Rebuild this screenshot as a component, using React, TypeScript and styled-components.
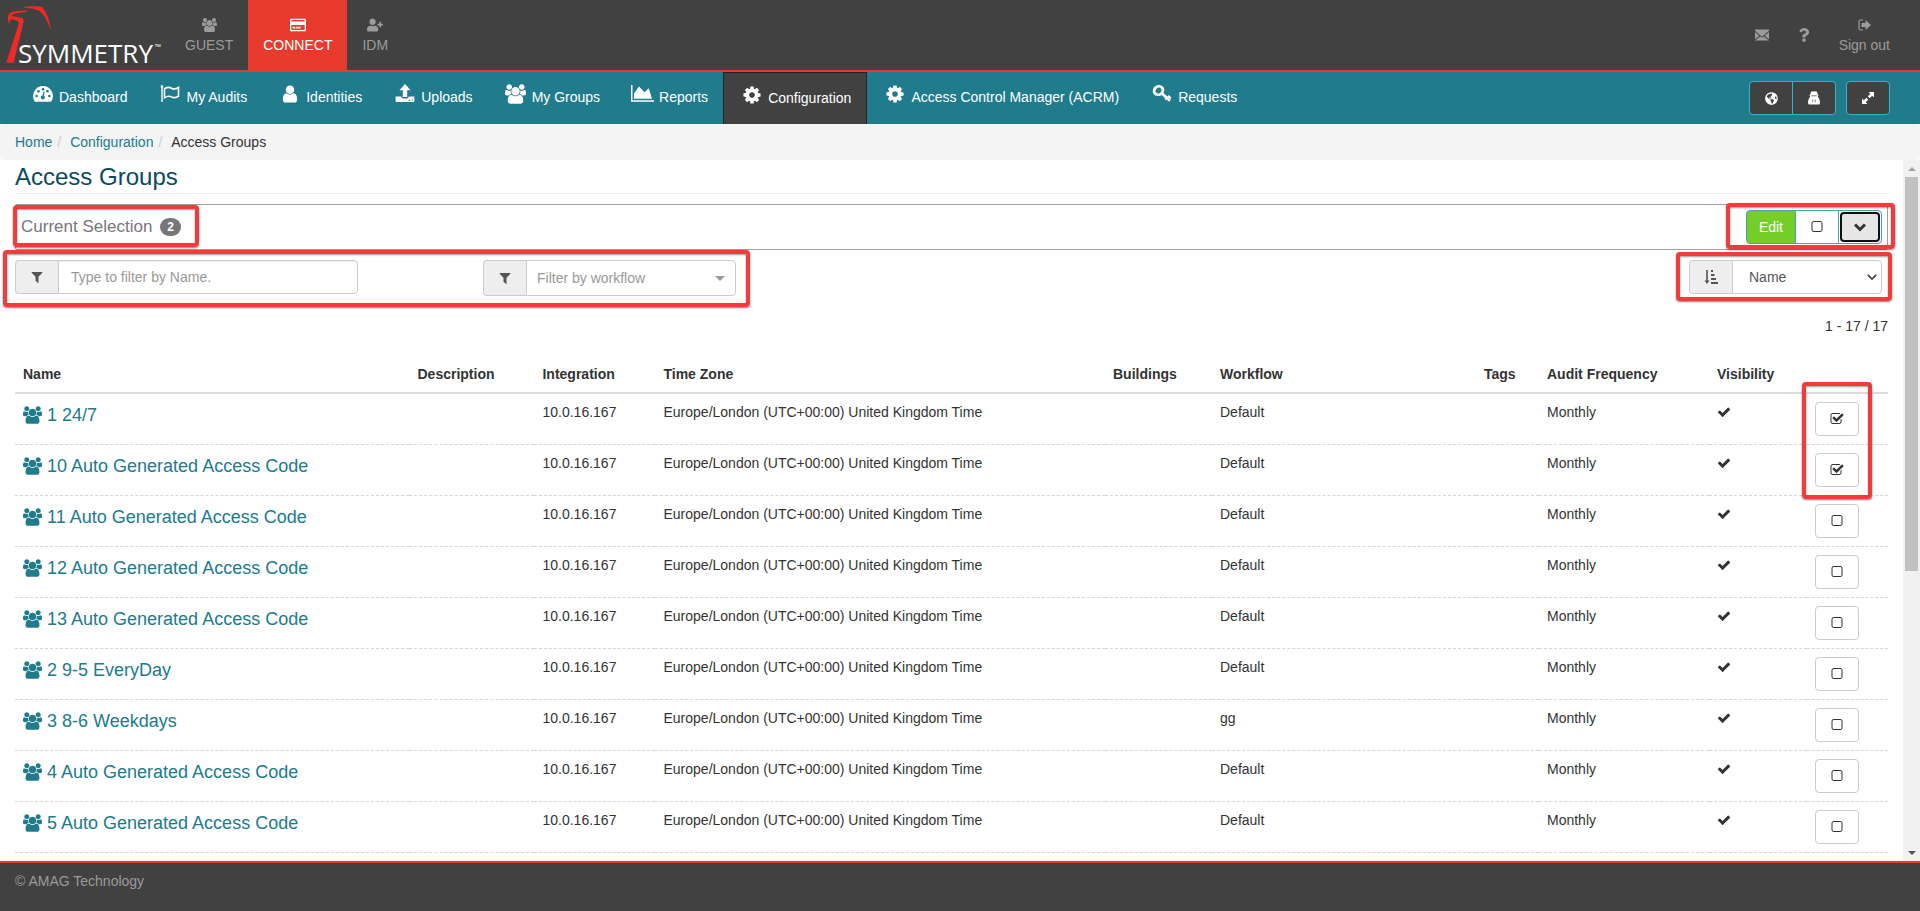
import React, { useState } from "react";
import styled, { createGlobalStyle, css } from "styled-components";
import { FaRegCreditCard, FaUserPlus, FaQuestion, FaGlobeAmericas } from "react-icons/fa";

const color = {
  dark: "#414141",
  red: "#e73c2d",
  teal: "#207b8d",
  tealLight: "#34b4cc",
  muted: "#9b9b9b",
  border: "#cccccc",
  text: "#333333",
  mark: "#f23c3c",
};

const GlobalStyle = createGlobalStyle`
  *, *::before, *::after { box-sizing: border-box; }
  body {
    margin: 0;
    background: #fff;
    color: ${color.text};
    font: 14px/20px "Liberation Sans", Arial, sans-serif;
  }
  button, input, select { font: inherit; margin: 0; }
  svg { display: block; flex: none; }
  a { text-decoration: none; }
`;

/* ---------- icons ---------- */

const PATHS = {
  users:
    "M593 896q-162 5-265 128h-134q-82 0-138-40.500t-56-118.500q0-353 124-353 6 0 43.500 21t97.500 42.500 119 21.500q67 0 133-23-5 37-5 66 0 139 81 256zm1071 637q0 120-73 189.500t-194 69.500h-874q-121 0-194-69.500t-73-189.500q0-53 3.500-103.500t14-109 26.500-108.500 43-97.500 62-81 85.500-53.500 111.500-20q10 0 43 21.500t73 48 107 48 135 21.500 135-21.500 107-48 73-48 43-21.500q61 0 111.500 20t85.500 53.500 62 81 43 97.500 26.500 108.500 14 109 3.500 103.500zm-1024-1277q0 106-75 181t-181 75-181-75-75-181 75-181 181-75 181 75 75 181zm704 384q0 159-112.500 271.500t-271.500 112.500-271.500-112.500-112.500-271.500 112.500-271.500 271.500-112.500 271.500 112.500 112.500 271.500zm576 225q0 78-56 118.500t-138 40.500h-134q-103-123-265-128 81-117 81-256 0-29-5-66 66 23 133 23 59 0 119-21.500t97.500-42.500 43.500-21q124 0 124 353zm-128-609q0 106-75 181t-181 75-181-75-75-181 75-181 181-75 181 75 75 181z",
  user: "M1536 1399q0 109-62.500 187t-150.500 78h-854q-88 0-150.500-78t-62.500-187q0-85 8.500-160.500t31.500-152 58.500-131 94-89 134.500-34.500q131 128 313 128t313-128q76 0 134.500 34.500t94 89 58.500 131 31.500 152 8.500 160.500zm-256-887q0 159-112.500 271.500t-271.500 112.500-271.500-112.500-112.500-271.500 112.500-271.500 271.500-112.500 271.500 112.500 112.500 271.500z",
  check:
    "M1671 566q0 40-28 68l-724 724-136 136q-28 28-68 28t-68-28l-136-136-362-362q-28-28-28-68t28-68l136-136q28-28 68-28t68 28l294 295 656-657q28-28 68-28t68 28l136 136q28 28 28 68z",
  checked:
    "M1472 930v318q0 119-84.500 203.500t-203.500 84.500h-832q-119 0-203.500-84.500t-84.500-203.500v-832q0-119 84.500-203.500t203.500-84.500h832q63 0 117 25 15 7 18 23 3 17-9 29l-49 49q-10 10-23 10-3 0-9-2-23-6-45-6h-832q-66 0-113 47t-47 113v832q0 66 47 113t113 47h832q66 0 113-47t47-113v-254q0-13 9-22l64-64q10-10 23-10 6 0 12 3 20 8 20 29zm231-489l-814 814q-24 24-57 24t-57-24l-430-430q-24-24-24-57t24-57l110-110q24-24 57-24t57 24l263 263 647-647q24-24 57-24t57 24l110 110q24 24 24 57t-24 57z",
  square:
    "M1312 256h-832q-66 0-113 47t-47 113v832q0 66 47 113t113 47h832q66 0 113-47t47-113v-832q0-66-47-113t-113-47zm288 160v832q0 119-84.500 203.500t-203.500 84.500h-832q-119 0-203.500-84.500t-84.500-203.500v-832q0-119 84.500-203.500t203.500-84.500h832q119 0 203.500 84.500t84.500 203.500z",
  cog: "M1152 896q0-106-75-181t-181-75-181 75-75 181 75 181 181 75 181-75 75-181zm512-109v222q0 12-8 23t-20 13l-185 28q-19 54-39 91 35 50 107 138 10 12 10 25t-9 23q-27 37-99 108t-94 71q-12 0-26-9l-138-108q-44 23-91 38-16 136-29 186-7 28-36 28h-222q-14 0-24.500-8.500t-11.500-21.500l-28-184q-49-16-90-37l-141 107q-10 9-25 9-14 0-25-11-126-114-165-168-7-10-7-23 0-12 8-23 15-21 51-66.500t54-70.500q-27-50-41-99l-183-27q-13-2-21-12.500t-8-23.500v-222q0-12 8-23t19-13l186-28q14-46 39-92-40-57-107-138-10-12-10-24 0-10 9-23 26-36 98.500-107.500t94.500-71.500q13 0 26 10l138 107q44-23 91-38 16-136 29-186 7-28 36-28h222q14 0 24.500 8.500t11.500 21.500l28 184q49 16 90 37l142-107q9-9 24-9 13 0 25 10 129 119 165 170 7 8 7 22 0 12-8 23-15 21-51 66.500t-54 70.500q26 50 41 98l183 28q13 2 21 12.500t8 23.500z",
  filter:
    "M1595 295q17 41-14 70l-493 493v742q0 42-39 59-13 5-25 5-27 0-45-19l-256-256q-19-19-19-45v-486l-493-493q-31-29-14-70 17-39 59-39h1280q42 0 59 39z",
};

type GlyphProps = { name: keyof typeof PATHS; size: number };

const Glyph = ({ name, size }: GlyphProps) => {
  const box = name === "users" ? 1920 : 1792;
  return (
    <svg width={Math.round((size * box) / 1792)} height={size} viewBox={`0 0 ${box} 1792`} fill="currentColor" aria-hidden="true">
      <path d={PATHS[name]} />
    </svg>
  );
};

const DashboardIcon = () => (
  <svg width="20" height="20" viewBox="0 0 20 20" aria-hidden="true">
    <path d="M10 2a10 10 0 0 0-8.400 15.200q.3.500.9.500h15q.6 0 .9-.5A10 10 0 0 0 10 2z" fill="#fff" />
    <g fill={color.teal}>
      <circle cx="3.600" cy="12" r="1.300" />
      <circle cx="5.500" cy="7.300" r="1.300" />
      <circle cx="10" cy="5.300" r="1.300" />
      <circle cx="14.500" cy="7.300" r="1.300" />
      <circle cx="16.400" cy="12" r="1.300" />
      <path d="M10.500 7.500l1.200.3-.8 4a2 2 0 1 1-1.300-.3z" />
    </g>
  </svg>
);

const FlagIcon = () => (
  <svg width="20" height="20" viewBox="0 0 20 20" fill="none" stroke="#fff" aria-hidden="true">
    <circle cx="2" cy="2.600" r="1.400" fill="#fff" stroke="none" />
    <path d="M2 3v15" strokeWidth="1.400" />
    <path d="M4.500 4.800C7 3.300 9 2.700 11.500 4.200s4.500.8 7-.7v8.800c-2.500 1.500-4.500 2-7 .6s-4.500-.7-7 .9z" strokeWidth="1.600" />
  </svg>
);

const UploadIcon = () => (
  <svg width="20" height="20" viewBox="0 0 20 20" aria-hidden="true">
    <path d="M10 0l5.600 6.200h-3.400V13H7.800V6.200H4.400z" fill="#fff" />
    <path d="M.6 12.600h5.600q.4 2 2 2h3.600q1.600 0 2-2h5.600V17q0 1-1 1H1.600q-1 0-1-1z" fill="#fff" />
    <g fill={color.teal}>
      <circle cx="14.300" cy="16.200" r=".7" />
      <circle cx="17.200" cy="16.200" r=".7" />
    </g>
  </svg>
);

const ChartIcon = () => (
  <svg width="23" height="20" viewBox="0 0 23 20" fill="#fff" aria-hidden="true">
    <path d="M0 1h1.500v15.300H23v1.500H0z" />
    <path d="M3 14.800V9.500L8 2.500l5.500 5.700 4.200-4L21 14.800z" />
  </svg>
);

const KeyIcon = () => (
  <svg width="20" height="20" viewBox="0 0 20 20" fill="none" stroke="#fff" aria-hidden="true">
    <ellipse cx="6.500" cy="6.500" rx="4.600" ry="4" strokeWidth="2.800" transform="rotate(-35 6.500 6.500)" />
    <path d="M9.500 9l8.500 7.700" strokeWidth="2.600" />
    <path d="M13.200 15.500l2.200-2.600M16 11.700l2.800 2.600" strokeWidth="2" />
  </svg>
);

const EnvelopeIcon = () => (
  <svg width="14" height="12" viewBox="0 0 14 12" fill="currentColor" aria-hidden="true">
    <path d="M0 .5h14v1.300L7.600 7.200q-.6.500-1.200 0L0 1.800z" />
    <path d="M0 3l4.300 3.700L0 10.300zM14 3L9.700 6.700l4.300 3.600zM5.100 7.400l.8.700q1.100.8 2.200 0l.8-.7 5.100 4.100H0z" />
  </svg>
);

const SignOutIcon = () => (
  <svg width="13" height="12" viewBox="0 0 13 12" aria-hidden="true">
    <path d="M5 1H2.500Q1 1 1 2.500v7Q1 11 2.500 11H5" fill="none" stroke="currentColor" strokeWidth="1.200" />
    <path d="M3.500 4H7.500V1L13 6l-5.500 5V8h-4z" fill="currentColor" />
  </svg>
);

const AgentIcon = () => (
  <svg width="12" height="14" viewBox="0 0 12 14" fill="currentColor" aria-hidden="true">
    <path d="M3 .8Q4.200 0 5 .6h2Q7.800 0 9 .8l.7 2.600 1 .8-1 .8 1 2Q12 8.500 12 12q0 1.500-1.500 1.500h-9Q0 13.500 0 12q0-3.500 1.300-5l1-2-1-.8 1-.8z" />
    <path d="M4.300 8.200l1 1-.5 3zM7.700 8.200l-1 1 .5 3z" fill={color.dark} />
    <path d="M3.300 4.500h5.400v.7H3.300z" fill={color.dark} />
  </svg>
);

const ExpandIcon = () => (
  <svg width="14" height="14" viewBox="0 0 14 14" fill="currentColor" aria-hidden="true">
    <path d="M7.500 1H13v5.500l-1.800-1.800-2.500 2.500-1.900-1.900 2.500-2.500zM6.500 13H1V7.500l1.800 1.800 2.500-2.500 1.900 1.900-2.500 2.500z" />
  </svg>
);

const ChevronIcon = ({ size, weight }: { size: number; weight: number }) => (
  <svg width={size} height={size} viewBox="0 0 12 12" fill="none" stroke="currentColor" strokeWidth={weight} aria-hidden="true">
    <path d="M1 3.500l5 5 5-5" />
  </svg>
);

const SortIcon = () => (
  <svg width="14" height="14" viewBox="0 0 14 14" fill="currentColor" aria-hidden="true">
    <path d="M2.200 0h1.600v10.500h1.700L3 14 .5 10.500h1.700zM7 0h2v2H7zM7 4h3.500v2H7zM7 8h5v2H7zM7 12h7v2H7z" />
  </svg>
);

const Logo = () => (
  <svg width="170" height="70" viewBox="0 0 170 70" role="img" aria-label="Symmetry">
    <g transform="scale(.3333)" fill="#ee2a24">
      <path d="M66 24Q98 13 126 21Q149 48 153 94Q140 50 119 33Q96 22 66 24Z" />
      <path d="M28 74Q18 50 30 38Q50 31 84 32Q82 36 60 38Q38 40 34 48Q50 50 66 54Q73 58 70 68L41 188L19 188L56 72Q57 63 46 60Q34 57 30 60Z" />
    </g>
    <text x="18" y="63" fill="#fff" fontSize="26" fontFamily='"Open Sans", sans-serif'>
      SYMMETRY
    </text>
    <text x="154" y="49" fill="#fff" fontSize="7" fontFamily='"Liberation Sans", sans-serif'>
      ™
    </text>
  </svg>
);

/* ---------- page frame ---------- */

const Page = styled.div`
  display: flex;
  flex-direction: column;
  height: 100vh;
  overflow: hidden;
`;

const Header = styled.header`
  display: flex;
  flex: none;
  background: ${color.dark};
  border-bottom: 2px solid ${color.red};
  padding-right: 15px;
`;

const Spacer = styled.div`
  flex: 1;
`;

const ProductLink = styled.a<{ $active?: boolean }>`
  display: flex;
  flex-direction: column;
  align-items: center;
  justify-content: center;
  min-height: 70px;
  padding: 0 15px;
  color: ${(p) => (p.$active ? "#fff" : color.muted)};
  background: ${(p) => (p.$active ? color.red : "transparent")};
`;

const ProductIcon = styled.span<{ $narrow?: boolean }>`
  display: flex;
  align-items: center;
  justify-content: center;
  height: 20px;
  width: ${(p) => (p.$narrow ? "10px" : "auto")};
`;

const NavBar = styled.nav`
  display: flex;
  flex: none;
  align-items: stretch;
  min-height: 52px;
  padding: 0 30px 0 15px;
  background: ${color.teal};
`;

const NavLink = styled.a<{ $active?: boolean }>`
  display: flex;
  align-items: flex-start;
  gap: 4px;
  padding: 12px 15px 0;
  color: #fff;
  ${(p) =>
    p.$active &&
    css`
      background: ${color.dark};
      border: 1px solid #222;
      border-bottom: 0;
    `}
`;

const NavIcon = styled.span`
  display: flex;
  justify-content: center;
  width: 25px;
`;

const NavLabel = styled.span`
  padding-top: 3px;
`;

const NavTools = styled.div`
  display: flex;
  gap: 10px;
  align-items: center;
`;

const ButtonGroup = styled.div`
  display: flex;
  position: relative;
  & > button:not(:first-of-type) {
    margin-left: -1px;
    border-top-left-radius: 0;
    border-bottom-left-radius: 0;
  }
  & > button:not(:last-of-type) {
    border-top-right-radius: 0;
    border-bottom-right-radius: 0;
  }
`;

const Button = styled.button<{ $kind?: "tool" | "edit" | "panel" | "row" }>`
  display: flex;
  align-items: center;
  justify-content: center;
  min-width: 44px;
  height: 34px;
  padding: 0 12px;
  border: 1px solid ${color.border};
  border-radius: 4px;
  background: #fff;
  color: ${color.text};
  ${(p) =>
    p.$kind === "tool" &&
    css`
      background: ${color.dark};
      border-color: ${color.tealLight};
      color: #fff;
    `}
  ${(p) =>
    p.$kind === "panel" &&
    css`
      border-color: #46a3b5;
    `}
  ${(p) =>
    p.$kind === "edit" &&
    css`
      background: #73cf28;
      border-color: #46a3b5;
      color: #fff;
    `}
`;

const FocusedButton = styled(Button)`
  padding: 0;
  & > span {
    display: flex;
    align-items: center;
    justify-content: center;
    width: 40px;
    height: 30px;
    border: 2px solid #101010;
    border-radius: 4px;
    background: #e6e6e6;
  }
`;

const Breadcrumb = styled.ol`
  display: flex;
  flex: none;
  margin: 0;
  padding: 8px 15px;
  list-style: none;
  background: #f4f4f4;
  border-radius: 4px;
  & > li + li::before {
    content: "/\\00a0";
    padding: 0 5px;
    color: #ccc;
  }
`;

const TextLink = styled.a`
  color: ${color.teal};
`;

const Body = styled.div`
  display: flex;
  flex: 1;
  min-height: 0;
`;

const Main = styled.main`
  flex: 1;
  min-width: 0;
  overflow: hidden;
  padding: 0 15px;
`;

const ScrollTrack = styled.div`
  display: flex;
  flex-direction: column;
  align-items: center;
  width: 17px;
  background: #f1f1f1;
`;

const ScrollArrow = styled.span<{ $down?: boolean }>`
  display: flex;
  align-items: center;
  justify-content: center;
  height: 17px;
  color: ${(p) => (p.$down ? "#505050" : "#a3a3a3")};
`;

const ScrollRail = styled.div`
  flex: 1;
  width: 13px;
`;

const ScrollThumb = styled.div`
  height: 59%;
  background: #c1c1c1;
`;

const Footer = styled.footer`
  flex: none;
  min-height: 50px;
  padding: 8px 15px;
  border-top: 2px solid ${color.red};
  background: ${color.dark};
  color: ${color.muted};
`;

/* ---------- content ---------- */

const Title = styled.h1`
  margin: 0 0 10px;
  padding: 4px 0 3px;
  border-bottom: 1px solid #eee;
  color: #0b4a5c;
  font-size: 24px;
  font-weight: 400;
  line-height: 26px;
`;

const Mark = styled.span<{ $box: [number, number, number, number] }>`
  position: absolute;
  top: ${(p) => p.$box[0]}px;
  right: ${(p) => p.$box[1]}px;
  bottom: ${(p) => p.$box[2]}px;
  left: ${(p) => p.$box[3]}px;
  border: 4px solid ${color.mark};
  border-radius: 4px;
  box-shadow: 0 1px 2px rgba(0, 0, 0, 0.5), inset 0 1px 2px rgba(0, 0, 0, 0.4);
  pointer-events: none;
  z-index: 1;
`;

const SelectionPanel = styled.section`
  display: flex;
  align-items: center;
  justify-content: space-between;
  height: 46px;
  margin-bottom: 10px;
  padding: 0 5px;
  border: 1px solid #a0a0a0;
  border-radius: 2px;
`;

const SelectionTitle = styled.h2`
  display: flex;
  position: relative;
  align-items: center;
  gap: 8px;
  margin: 0;
  color: #777;
  font-size: 17px;
  font-weight: 400;
`;

const Badge = styled.span`
  min-width: 20px;
  padding: 3px 7px;
  border-radius: 10px;
  background: #777;
  color: #fff;
  font-size: 12px;
  font-weight: 700;
  line-height: 12px;
  text-align: center;
`;

const Toolbar = styled.div`
  display: flex;
  align-items: flex-start;
  justify-content: space-between;
  margin-bottom: 20px;
  padding-right: 6px;
`;

const Filters = styled.div`
  display: flex;
  position: relative;
  align-items: flex-start;
  gap: 125px;
`;

const InputGroup = styled.div<{ $width: number; $tall?: boolean }>`
  display: flex;
  position: relative;
  width: ${(p) => p.$width}px;
  height: ${(p) => (p.$tall ? 36 : 34)}px;
`;

const Addon = styled.label`
  display: flex;
  flex: none;
  align-items: center;
  justify-content: center;
  width: 43px;
  border: 1px solid ${color.border};
  border-right: 0;
  border-radius: 4px 0 0 4px;
  background: #eee;
  color: #555;
`;

const fieldStyle = css`
  flex: 1;
  min-width: 0;
  padding: 0 12px;
  border: 1px solid ${color.border};
  border-radius: 0 4px 4px 0;
  background: #fff;
  color: #555;
`;

const TextField = styled.input`
  ${fieldStyle}
  box-shadow: inset 0 1px 1px rgba(0, 0, 0, 0.075);
  &::placeholder {
    color: #999;
    opacity: 1;
  }
`;

const SelectField = styled.select<{ $empty?: boolean }>`
  ${fieldStyle}
  appearance: none;
  padding: 0 ${(p) => (p.$empty ? 10 : 16)}px;
  color: ${(p) => (p.$empty ? "#999" : "#555")};
`;

const FieldArrow = styled.span<{ $right: number }>`
  display: flex;
  position: absolute;
  top: 0;
  right: ${(p) => p.$right}px;
  bottom: 0;
  align-items: center;
  color: #444;
  pointer-events: none;
`;

const Caret = styled.i`
  border: 5px solid transparent;
  border-top-color: #999;
  border-bottom: 0;
`;

const Count = styled.p`
  margin: 0 0 20px;
  text-align: right;
`;

const TableWrap = styled.div`
  position: relative;
`;

const Table = styled.table`
  width: 100%;
  border-collapse: collapse;
  table-layout: fixed;
  th {
    padding: 8px;
    border-bottom: 2px solid #ddd;
    text-align: left;
    font-weight: 700;
  }
  td {
    height: 51px;
    padding: 8px;
    border-bottom: 1px dashed #d6d6d6;
    vertical-align: top;
  }
`;

const Col = styled.col<{ $width?: string }>`
  width: ${(p) => p.$width ?? "auto"};
`;

const GroupLink = styled.a`
  display: flex;
  align-items: center;
  gap: 5px;
  color: ${color.teal};
  font-size: 18px;
  line-height: 26px;
  white-space: nowrap;
`;

const CheckCell = styled.span`
  display: flex;
  align-items: center;
  height: 20px;
`;

const RowsMark = styled(Mark)`
  top: 26px;
  right: 16px;
  bottom: auto;
  left: auto;
  width: 70px;
  height: 117px;
`;

const NAV = [
  { label: "Dashboard", icon: <DashboardIcon /> },
  { label: "My Audits", icon: <FlagIcon /> },
  { label: "Identities", icon: <Glyph name="user" size={20} /> },
  { label: "Uploads", icon: <UploadIcon /> },
  { label: "My Groups", icon: <Glyph name="users" size={20} /> },
  { label: "Reports", icon: <ChartIcon /> },
  { label: "Configuration", icon: <Glyph name="cog" size={20} />, active: true },
  { label: "Access Control Manager (ACRM)", icon: <Glyph name="cog" size={20} /> },
  { label: "Requests", icon: <KeyIcon /> },
];

const COLUMNS: [string, string?][] = [
  ["Name"],
  ["Description", "125px"],
  ["Integration", "121px"],
  ["Time Zone", "24%"],
  ["Buildings", "107px"],
  ["Workflow", "264px"],
  ["Tags", "63px"],
  ["Audit Frequency", "170px"],
  ["Visibility", "98px"],
  ["", "81px"],
];

const GROUPS = [
  { name: "1 24/7", workflow: "Default" },
  { name: "10 Auto Generated Access Code", workflow: "Default" },
  { name: "11 Auto Generated Access Code", workflow: "Default" },
  { name: "12 Auto Generated Access Code", workflow: "Default" },
  { name: "13 Auto Generated Access Code", workflow: "Default" },
  { name: "2 9-5 EveryDay", workflow: "Default" },
  { name: "3 8-6 Weekdays", workflow: "gg" },
  { name: "4 Auto Generated Access Code", workflow: "Default" },
  { name: "5 Auto Generated Access Code", workflow: "Default" },
];

export default function App() {
  const [selected, setSelected] = useState<string[]>([GROUPS[0].name, GROUPS[1].name]);
  const toggle = (name: string) =>
    setSelected((list) => (list.includes(name) ? list.filter((n) => n !== name) : [...list, name]));

  return (
    <Page>
      <GlobalStyle />
      <Header>
        <Logo />
        <ProductLink href="#guest">
          <ProductIcon><Glyph name="users" size={14} /></ProductIcon>
          GUEST
        </ProductLink>
        <ProductLink href="#connect" $active>
          <ProductIcon><FaRegCreditCard size={16} /></ProductIcon>
          CONNECT
        </ProductLink>
        <ProductLink href="#idm">
          <ProductIcon><FaUserPlus size={16} /></ProductIcon>
          IDM
        </ProductLink>
        <Spacer />
        <ProductLink href="#messages" aria-label="Messages"><EnvelopeIcon /></ProductLink>
        <ProductLink href="#help" aria-label="Help">
          <ProductIcon $narrow><FaQuestion size={14} /></ProductIcon>
        </ProductLink>
        <ProductLink href="#signout">
          <ProductIcon><SignOutIcon /></ProductIcon>
          Sign out
        </ProductLink>
      </Header>

      <NavBar>
        {NAV.map((item) => (
          <NavLink key={item.label} href="#nav" $active={item.active}>
            <NavIcon>{item.icon}</NavIcon>
            <NavLabel>{item.label}</NavLabel>
          </NavLink>
        ))}
        <Spacer />
        <NavTools>
          <ButtonGroup>
            <Button $kind="tool" aria-label="Language"><FaGlobeAmericas size={13} /></Button>
            <Button $kind="tool" aria-label="Impersonate"><AgentIcon /></Button>
          </ButtonGroup>
          <Button $kind="tool" aria-label="Full width"><ExpandIcon /></Button>
        </NavTools>
      </NavBar>

      <Breadcrumb>
        <li><TextLink href="#home">Home</TextLink></li>
        <li><TextLink href="#configuration">Configuration</TextLink></li>
        <li>Access Groups</li>
      </Breadcrumb>

      <Body>
        <Main>
          <Title>Access Groups</Title>

          <SelectionPanel>
            <SelectionTitle>
              Current Selection <Badge>{selected.length}</Badge>
              <Mark $box={[-12, -18, -10, -8]} />
            </SelectionTitle>
            <ButtonGroup>
              <Button $kind="edit">Edit</Button>
              <Button $kind="panel" aria-label="Clear selection"><Glyph name="square" size={14} /></Button>
              <FocusedButton $kind="panel" aria-label="Expand selection">
                <span><ChevronIcon size={12} weight={3} /></span>
              </FocusedButton>
              <Mark $box={[-7, -13, -5, -20]} />
            </ButtonGroup>
          </SelectionPanel>

          <Toolbar>
            <Filters>
              <InputGroup $width={343}>
                <Addon htmlFor="filter-name" aria-label="Filter by name"><Glyph name="filter" size={14} /></Addon>
                <TextField id="filter-name" placeholder="Type to filter by Name." />
              </InputGroup>
              <InputGroup $width={253} $tall>
                <Addon htmlFor="filter-workflow" aria-label="Filter by workflow"><Glyph name="filter" size={14} /></Addon>
                <SelectField id="filter-workflow" $empty>
                  <option>Filter by workflow</option>
                </SelectField>
                <FieldArrow $right={11}><Caret /></FieldArrow>
              </InputGroup>
              <Mark $box={[-10, -14, -11, -12]} />
            </Filters>
            <InputGroup $width={193}>
              <Addon htmlFor="sort-by" aria-label="Sort by"><SortIcon /></Addon>
              <SelectField id="sort-by">
                <option>Name</option>
              </SelectField>
              <FieldArrow $right={5}><ChevronIcon size={10} weight={2} /></FieldArrow>
              <Mark $box={[-8, -10, -7, -13]} />
            </InputGroup>
          </Toolbar>

          <Count>1 - 17 / 17</Count>

          <TableWrap>
            <Table>
              <colgroup>
                {COLUMNS.map(([label, width]) => (
                  <Col key={label} $width={width} />
                ))}
              </colgroup>
              <thead>
                <tr>
                  {COLUMNS.map(([label]) => (
                    <th key={label} scope="col">{label}</th>
                  ))}
                </tr>
              </thead>
              <tbody>
                {GROUPS.map((group) => {
                  const on = selected.includes(group.name);
                  return (
                    <tr key={group.name}>
                      <td>
                        <GroupLink href="#group"><Glyph name="users" size={18} /> {group.name}</GroupLink>
                      </td>
                      <td />
                      <td>10.0.16.167</td>
                      <td>Europe/London (UTC+00:00) United Kingdom Time</td>
                      <td />
                      <td>{group.workflow}</td>
                      <td />
                      <td>Monthly</td>
                      <td><CheckCell><Glyph name="check" size={14} /></CheckCell></td>
                      <td>
                        <Button $kind="row" aria-pressed={on} aria-label={`Select ${group.name}`} onClick={() => toggle(group.name)}>
                          <Glyph name={on ? "checked" : "square"} size={14} />
                        </Button>
                      </td>
                    </tr>
                  );
                })}
              </tbody>
            </Table>
            <RowsMark $box={[0, 0, 0, 0]} />
          </TableWrap>
        </Main>

        <ScrollTrack aria-hidden="true">
          <ScrollArrow>
            <svg width="8" height="4" viewBox="0 0 8 4" fill="currentColor"><path d="M0 4l4-4 4 4z" /></svg>
          </ScrollArrow>
          <ScrollRail><ScrollThumb /></ScrollRail>
          <ScrollArrow $down>
            <svg width="8" height="4" viewBox="0 0 8 4" fill="currentColor"><path d="M0 0l4 4 4-4z" /></svg>
          </ScrollArrow>
        </ScrollTrack>
      </Body>

      <Footer>© AMAG Technology</Footer>
    </Page>
  );
}
